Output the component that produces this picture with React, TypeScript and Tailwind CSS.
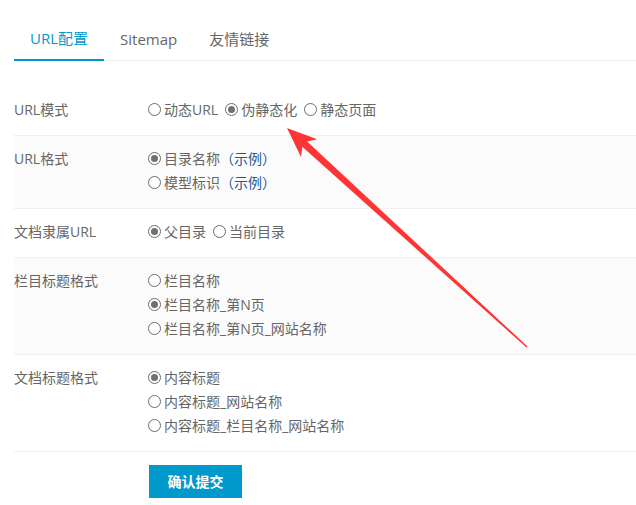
import React from 'react';

type Opt = { label: string; checked?: boolean; link?: boolean };
type Row = { label: string; options: Opt[]; inline?: boolean; shaded?: boolean };

const rows: Row[] = [
  {
    label: 'URL模式',
    inline: true,
    options: [{ label: '动态URL' }, { label: '伪静态化', checked: true }, { label: '静态页面' }],
  },
  {
    label: 'URL格式',
    shaded: true,
    options: [
      { label: '目录名称', checked: true, link: true },
      { label: '模型标识', link: true },
    ],
  },
  {
    label: '文档隶属URL',
    inline: true,
    options: [{ label: '父目录', checked: true }, { label: '当前目录' }],
  },
  {
    label: '栏目标题格式',
    shaded: true,
    options: [
      { label: '栏目名称' },
      { label: '栏目名称_第N页', checked: true },
      { label: '栏目名称_第N页_网站名称' },
    ],
  },
  {
    label: '文档标题格式',
    options: [
      { label: '内容标题', checked: true },
      { label: '内容标题_网站名称' },
      { label: '内容标题_栏目名称_网站名称' },
    ],
  },
];

function Radio({ checked }: { checked?: boolean }) {
  return (
    <span className="w-[13px] h-[13px] rounded-full border border-[#6b6b6b] bg-white flex items-center justify-center shrink-0 mr-[3px]">
      {checked && <span className="w-[7px] h-[7px] rounded-full bg-[#707070]" />}
    </span>
  );
}

function Option({ opt }: { opt: Opt }) {
  return (
    <label className="flex items-center h-[24px] mr-[7px]">
      <Radio checked={opt.checked} />
      <span>{opt.label}</span>
      {opt.link && <span className="text-[#255a96]">（示例）</span>}
    </label>
  );
}

export default function App() {
  const tabs = ['URL配置', 'Sitemap', '友情链接'];
  return (
    <div
      className="relative w-[636px] h-[505px] bg-white overflow-hidden text-[14px] text-[#666]"
      style={{ fontFamily: '"Open Sans", "Noto Sans CJK SC", sans-serif' }}
    >
      <div className="pl-[14px] pt-[17px]">
        <div className="flex border-b border-[#ebebeb]">
          {tabs.map((t, i) => (
            <div
              key={t}
              className={`px-4 h-[44px] -mb-px flex items-center text-[15px] ${
                i === 0 ? 'border-b-2 border-[#0099cc] text-[#0099cc]' : 'text-[#666]'
              }`}
            >
              {t}
            </div>
          ))}
        </div>

        <div className="mt-[26px]">
          {rows.map((r) => (
            <div
              key={r.label}
              className={`flex pt-[10px] pb-[14px] border-b border-[#f0f0f0] ${r.shaded ? 'bg-[#fbfbfb]' : 'bg-white'}`}
            >
              <div className="w-[134px] h-[24px] flex items-center shrink-0">{r.label}</div>
              <div className={r.inline ? 'flex' : 'flex flex-col'}>
                {r.options.map((o) => (
                  <Option key={o.label} opt={o} />
                ))}
              </div>
            </div>
          ))}
        </div>

        <div className="pl-[135px] pt-[13px]">
          <button
            type="button"
            className="w-[93px] h-[33px] bg-[#0099cc] text-white text-[14px] font-bold"
          >
            确认提交
          </button>
        </div>
      </div>

      <svg className="absolute left-0 top-0 pointer-events-none" width="636" height="505">
        <polygon
          points="287,128 317.2,139.3 307.1,141.6 527.5,346.4 526.5,347.6 302.3,146.8 301,157"
          fill="#ff3535"
        />
      </svg>
    </div>
  );
}
